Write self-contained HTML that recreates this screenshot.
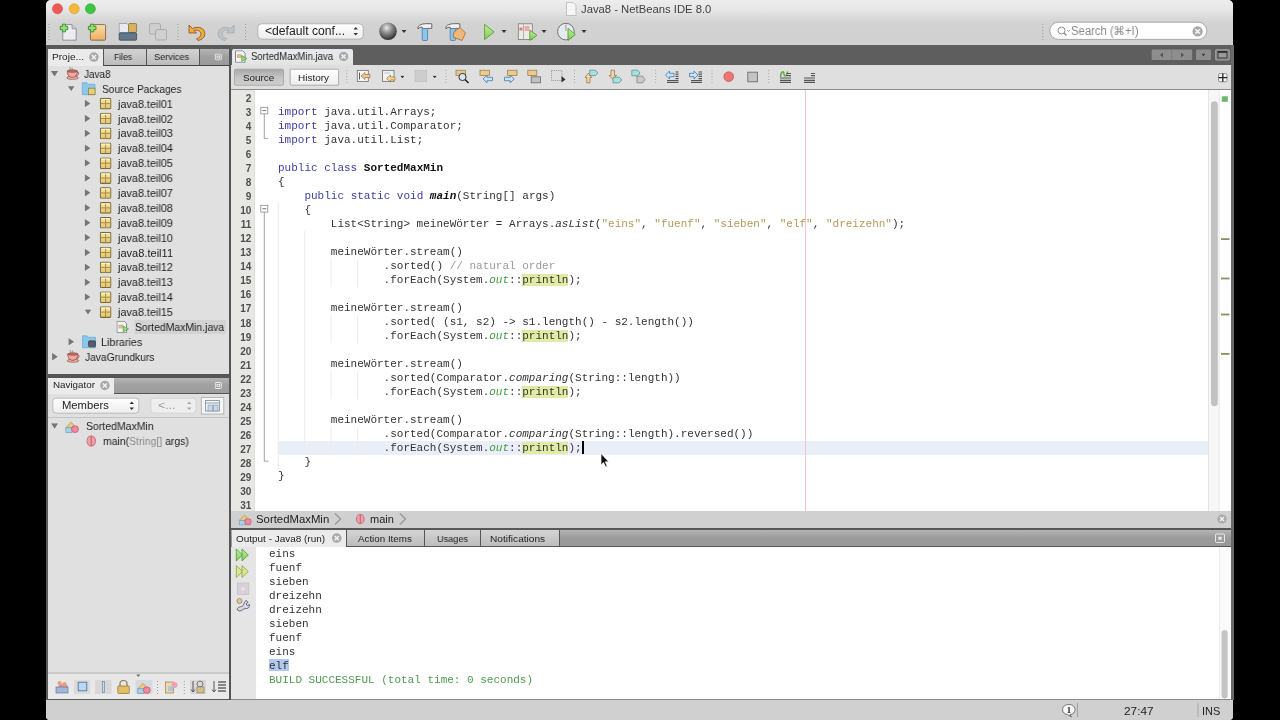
<!DOCTYPE html>
<html><head><meta charset="utf-8">
<style>
*{margin:0;padding:0;box-sizing:border-box}
html,body{width:1280px;height:720px;overflow:hidden;background:#000}
body{position:relative;font-family:"Liberation Sans",sans-serif;font-size:11px;color:#222}
.a{position:absolute}
.t{position:absolute;white-space:pre;line-height:14px;will-change:transform}
.mono{font-family:"Liberation Mono",monospace}
#code k{color:#3d3d9e}
#code s{color:#b39a5c;text-decoration:none}
#code c{color:#9a9a9a}
#code o{color:#3f9c3f;font-style:italic}
#code h{background:#e2eba5}
#code b{font-weight:bold;color:#111}
#code u{display:inline-block;width:2px;height:13px;background:#000;vertical-align:-3px;margin-left:0}
.lb{position:absolute;white-space:pre;line-height:1;transform-origin:0 0;will-change:transform}
</style></head><body>
<!-- window -->
<div class="a" id="win" style="left:46px;top:0;width:1187px;height:720px;background:#e6e6e6;border-radius:5px 5px 4px 4px;overflow:hidden">
</div>
<!-- title/toolbar -->
<div class="a" style="left:46px;top:0;width:1187px;height:45px;background:linear-gradient(#ededed,#e6e6e6 10px,#d3d3d3 22px,#d0d0d0);border-radius:5px 5px 0 0"></div>
<!-- dark band under toolbar -->
<div class="a" style="left:46px;top:45px;width:1187px;height:4px;background:#595959"></div>

<!-- left panel -->
<div class="a" style="left:46px;top:48px;width:2px;height:652px;background:#5c5c5c"></div>
<div class="a" style="left:47px;top:49px;width:182px;height:325px;background:#e0e0e0"></div>
<!-- project tabs row -->
<div class="a" style="left:47px;top:49px;width:182px;height:17px;background:linear-gradient(#b5b5b5,#a0a0a0 45%,#9a9a9a)"></div>
<div class="a" style="left:47px;top:49px;width:56px;height:17px;background:#ebebeb"></div>
<div class="a" style="left:103px;top:49px;width:43px;height:17px;background:linear-gradient(#d2d2d2,#bcbcbc);border-left:1px solid #555;border-bottom:1px solid #444"></div>
<div class="a" style="left:146px;top:49px;width:54px;height:17px;background:linear-gradient(#d2d2d2,#bcbcbc);border-left:1px solid #555;border-bottom:1px solid #444;border-right:1px solid #555"></div>
<div class="a" style="left:200px;top:65px;width:29px;height:1px;background:#444"></div>
<!-- divider between projects & navigator -->
<div class="a" style="left:47px;top:374px;width:182px;height:4px;background:#555"></div>
<!-- navigator -->
<div class="a" style="left:47px;top:378px;width:182px;height:322px;background:#e0e0e0"></div>
<div class="a" style="left:47px;top:378px;width:182px;height:16px;background:linear-gradient(#b5b5b5,#a0a0a0 45%,#9c9c9c)"></div>
<div class="a" style="left:47px;top:378px;width:67px;height:15.5px;background:#ebebeb"></div>
<div class="a" style="left:114px;top:393px;width:115px;height:1px;background:#555"></div>
<div class="a" style="left:47px;top:417px;width:182px;height:1px;background:#c4c4c4"></div>
<div class="a" style="left:47px;top:672px;width:182px;height:2px;background:#cacaca"></div>
<div class="a" style="left:47px;top:674px;width:182px;height:26px;background:linear-gradient(#e6e6e6,#ebebeb);border-bottom:1px solid #5c5c5c"></div>

<div class="a" style="left:46px;top:48px;width:2px;height:652px;background:#5c5c5c"></div>
<!-- vertical divider -->
<div class="a" style="left:229px;top:48px;width:2px;height:652px;background:#555"></div>

<!-- editor tab bar -->
<div class="a" style="left:231px;top:45px;width:1002px;height:20px;background:#5e5e5e"></div>
<div class="a" style="left:231px;top:64.5px;width:1002px;height:1px;background:#2e2e2e"></div>
<div class="a" style="left:232px;top:49px;width:121px;height:17px;background:linear-gradient(#e4e8ee,#e9e9e9 40%,#e2e2e2);border-radius:2px 2px 0 0"></div>
<!-- editor toolbar -->
<div class="a" style="left:231px;top:65px;width:1000px;height:24px;background:#dfdfdf"></div>
<div class="a" style="left:231px;top:89px;width:1000px;height:1px;background:#8c8c8c"></div>
<!-- editor content -->
<div class="a" style="left:231px;top:90px;width:1000px;height:421px;background:#fff"></div>
<div class="a" style="left:231px;top:90px;width:23.5px;height:421px;background:#e7e7e4;border-right:1px solid #dedede"></div>
<!-- breadcrumb -->
<div class="a" style="left:231px;top:511px;width:1000px;height:17.5px;background:#d0d0d0"></div>
<div class="a" style="left:231px;top:527.8px;width:1000px;height:2.8px;background:#575757"></div>
<!-- output tabs -->
<div class="a" style="left:231px;top:530px;width:1000px;height:17px;background:linear-gradient(#b5b5b5,#9c9c9c 45%,#989898)"></div>
<div class="a" style="left:232px;top:530px;width:114px;height:17px;background:#ebebeb"></div>
<div class="a" style="left:346px;top:530px;width:214px;height:17px;background:linear-gradient(#d4d4d4,#bdbdbd);border-left:1px solid #555;border-bottom:1px solid #555;border-right:1px solid #555"></div>
<div class="a" style="left:424px;top:530px;width:1px;height:17px;background:#555"></div>
<div class="a" style="left:480px;top:530px;width:1px;height:17px;background:#555"></div>
<div class="a" style="left:560px;top:546px;width:671px;height:1px;background:#555"></div>
<!-- output content -->
<div class="a" style="left:231px;top:547px;width:1000px;height:153px;background:#fff"></div>
<div class="a" style="left:231px;top:547px;width:25px;height:153px;background:#e5e5e5"></div>
<div class="a" style="left:231px;top:699px;width:1000px;height:1px;background:#8a8a8a"></div>
<!-- status bar -->
<div class="a" style="left:46px;top:700px;width:1187px;height:20px;background:#d0d0d0;border-radius:0 0 4px 4px"></div>
<div class="a" style="left:1231px;top:45px;width:2.5px;height:655px;background:#6a6a6a"></div>

<div class="a" style="left:277.5px;top:441px;width:930.5px;height:14px;background:#e9eef8"></div>
<!--ICONS-->
<svg class="a" style="left:0;top:0" width="1280" height="720" viewBox="0 0 1280 720"><defs>
<linearGradient id="gOr" x1="0" y1="0" x2="0" y2="1"><stop offset="0" stop-color="#fbdca8"/><stop offset="1" stop-color="#eeae62"/></linearGradient>
<linearGradient id="gGr" x1="0" y1="0" x2="0" y2="1"><stop offset="0" stop-color="#c4f0a0"/><stop offset="1" stop-color="#7ccc52"/></linearGradient>
<linearGradient id="gPk" x1="0" y1="0" x2="0" y2="1"><stop offset="0" stop-color="#f8e8a8"/><stop offset="1" stop-color="#e0c470"/></linearGradient>
<radialGradient id="gGlobe" cx="0.42" cy="0.3" r="0.7"><stop offset="0" stop-color="#e8e8e8"/><stop offset="0.45" stop-color="#8a8a8a"/><stop offset="1" stop-color="#2e2e2e"/></radialGradient>
<linearGradient id="gBtn" x1="0" y1="0" x2="0" y2="1"><stop offset="0" stop-color="#ffffff"/><stop offset="1" stop-color="#ededed"/></linearGradient>
<linearGradient id="gBtnDn" x1="0" y1="0" x2="0" y2="1"><stop offset="0" stop-color="#a8a8a8"/><stop offset="0.5" stop-color="#c4c4c4"/><stop offset="1" stop-color="#d0d0d0"/></linearGradient>
<symbol id="closeC" viewBox="0 0 12 12"><circle cx="6" cy="6" r="5.5" fill="#a9a9a9"/><path d="M3.6 3.6L8.4 8.4M8.4 3.6L3.6 8.4" stroke="#f4f4f4" stroke-width="1.6"/></symbol>
<symbol id="pkg" viewBox="0 0 12 12"><rect x="0.6" y="0.6" width="10.8" height="10.8" rx="1.2" fill="url(#gPk)" stroke="#7a6a38" stroke-width="1.1"/><path d="M6 1V11M1 6H11" stroke="#a88a40" stroke-width="1"/><path d="M1.5 1.8H10.5" stroke="#fff8d8" stroke-width="0.9"/></symbol>
<symbol id="triR" viewBox="0 0 6 8"><path d="M0 0L6 4L0 8Z" fill="#767676"/></symbol>
<symbol id="triD" viewBox="0 0 8 6"><path d="M0 0H8L4 6Z" fill="#767676"/></symbol>
<symbol id="ddArr" viewBox="0 0 5 3"><path d="M0 0H5L2.5 3Z" fill="#333"/></symbol>
<symbol id="cup" viewBox="0 0 13 13"><path d="M3.8 0.3C2.8 1.3 4.8 2 3.8 3.3M5.8 0.8C5.2 1.6 6.4 2.2 5.8 3.2" stroke="#6a8a7a" fill="none" stroke-width="0.9"/><ellipse cx="6.2" cy="11" rx="5.8" ry="1.7" fill="#e8aaa0" stroke="#8a5048" stroke-width="0.7"/><path d="M1 4.2H11C11 8.2 9 10.6 6 10.6C3 10.6 1 8.2 1 4.2Z" fill="#f2a8a0" stroke="#8a4a40" stroke-width="0.8"/><ellipse cx="6" cy="4.3" rx="5" ry="1.3" fill="#b86a60" stroke="#8a4a40" stroke-width="0.5"/><path d="M10.8 5.2C13 5.2 13 8.6 10 8.6" stroke="#8a4a40" fill="none" stroke-width="1"/></symbol>
<symbol id="jfile" viewBox="0 0 13 13"><path d="M0.5 0.5H8L10.5 3V12.5H0.5Z" fill="#f4f4f4" stroke="#6a7a8a" stroke-width="0.9"/><rect x="2" y="4" width="5" height="4" fill="#d8b890"/><path d="M7 5.5L12.5 8.5L7 11.5Z" fill="#9ad870" stroke="#4a9a3a" stroke-width="0.7"/></symbol>
<symbol id="restore" viewBox="0 0 10 10"><rect x="0.7" y="0.7" width="8.6" height="8.6" rx="1.2" fill="none" stroke="#f4f4f4" stroke-width="1.3"/><rect x="3.2" y="3.6" width="3.8" height="2.8" fill="none" stroke="#f4f4f4" stroke-width="1.1"/></symbol>
<symbol id="classI" viewBox="0 0 14 14"><path d="M1 8L6 3L9 6L4 11Z" fill="#f0c878" stroke="#a08040" stroke-width="0.6"/><path d="M0.5 8.5H7V13.5H0.5Z" fill="#a8d0f0" stroke="#5a8ab0" stroke-width="0.6"/><circle cx="10" cy="10" r="3.5" fill="#f08a9a" stroke="#b04a5a" stroke-width="0.6"/></symbol>
<symbol id="methI" viewBox="0 0 10 12"><ellipse cx="5" cy="6" rx="4.5" ry="5.5" fill="#eea0a8" stroke="#b85a68" stroke-width="0.8"/><path d="M5 0.8V11.2" stroke="#b85a68" stroke-width="1"/></symbol>
<symbol id="chev" viewBox="0 0 8 14"><path d="M1 1L7 7L1 13" fill="none" stroke="#9a9a9a" stroke-width="1.6"/></symbol>
</defs>
<circle cx="57.5" cy="8.8" r="5" fill="#ec5b56" stroke="#d0403a" stroke-width="0.6"/>
<circle cx="74.2" cy="8.8" r="5" fill="#f5b73a" stroke="#d89a28" stroke-width="0.6"/>
<circle cx="90.4" cy="8.8" r="5" fill="#3ec541" stroke="#2ea830" stroke-width="0.6"/>
<path d="M566.5 2.5H573L576 5.5V15.5H566.5Z" fill="#f6f6f6" stroke="#b8b8b8" stroke-width="0.8"/>
<line x1="49" y1="24" x2="49" y2="41" stroke="#9a9a9a" stroke-width="1" stroke-dasharray="1 2"/>
<line x1="178" y1="24" x2="178" y2="41" stroke="#9a9a9a" stroke-width="1" stroke-dasharray="1 2"/>
<line x1="245.5" y1="24" x2="245.5" y2="41" stroke="#9a9a9a" stroke-width="1" stroke-dasharray="1 2"/>
<line x1="1042.8" y1="24" x2="1042.8" y2="41" stroke="#9a9a9a" stroke-width="1" stroke-dasharray="1 2"/>
<path d="M62.8 24.6H72L76.2 28.8V40.2H62.8Z" fill="#ececf2" stroke="#8a8a8a" stroke-width="0.9"/><path d="M72 24.6V28.8H76.2" fill="#c8c8d0" stroke="#8a8a8a" stroke-width="0.7"/>
<path d="M62.4 24.2H65.6V26.4H67.8V29.6H65.6V31.8H62.4V29.6H60.2V26.4H62.4Z" fill="#92e07a" stroke="#3a8a2a" stroke-width="0.9"/>
<rect x="90.4" y="24.6" width="15.2" height="15.6" rx="1" fill="url(#gOr)" stroke="#7a6650" stroke-width="0.9"/>
<path d="M90.60000000000001 24.2H93.8V26.4H96.0V29.6H93.8V31.8H90.60000000000001V29.6H88.4V26.4H90.60000000000001Z" fill="#92e07a" stroke="#3a8a2a" stroke-width="0.9"/>
<path d="M119.2 23.5H127L128.5 25V33H119.2Z" fill="#e8eaf0" stroke="#9a9a9a" stroke-width="0.8"/>
<rect x="128.6" y="23.5" width="8" height="9" rx="1" fill="#d8b060" stroke="#8a7040" stroke-width="0.8"/>
<rect x="119.2" y="32.8" width="17.4" height="7.4" rx="1" fill="#60788a" stroke="#3a4a58" stroke-width="0.8"/>
<rect x="149.5" y="23.6" width="11" height="10.5" rx="1.5" fill="#cfcfcf" stroke="#a8a8a8" stroke-width="0.9"/><rect x="155.5" y="29.5" width="11" height="10.5" rx="1.5" fill="#cfcfcf" stroke="#a8a8a8" stroke-width="0.9"/>
<path d="M189 25V33H196.5L194 30.5C197 29.5 201 31 201 34C201 36.5 199 38 196.5 38.8L198 40.5C202.5 39.5 204.8 37 204.8 33.8C204.8 28.5 199 25.5 192.5 28.5Z" fill="#f2ac3c" stroke="#8a5a20" stroke-width="0.9" stroke-linejoin="round"/>
<path d="M234 25V33H226.5L229 30.5C226 29.5 222 31 222 34C222 36.5 224 38 226.5 38.8L225 40.5C220.5 39.5 218.2 37 218.2 33.8C218.2 28.5 224 25.5 230.5 28.5Z" fill="#bfc4c8" stroke="#a8adb2" stroke-width="0.9" stroke-linejoin="round"/>
<rect x="257.8" y="23.8" width="105.4" height="15.4" rx="4" fill="url(#gBtn)" stroke="#a8a8a8" stroke-width="0.8"/>
<path d="M353.5 29.5L355.7 27L358 29.5Z M353.5 33L355.7 35.5L358 33Z" fill="#333"/>
<circle cx="388" cy="31.3" r="8.8" fill="url(#gGlobe)"/>
<use href="#ddArr" x="401.5" y="30" width="5" height="3"/>
<path d="M418 27C419.5 24 424 23.3 431.8 23.8V28.4H427.6V28.6H422.2V27.2C420.6 27 419.2 27.6 418 29Z" fill="#f2f2f2" stroke="#5a5a5a" stroke-width="0.9" stroke-linejoin="round"/>
<rect x="422.2" y="28.5" width="5.4" height="12" rx="1" fill="#8cc4ec" stroke="#4a7aa8" stroke-width="0.8"/>
<path d="M446 27C447.5 24 452 23.3 459.8 23.8V28.4H455.6V28.6H450.2V27.2C448.6 27 447.2 27.6 446 29Z" fill="#f2f2f2" stroke="#5a5a5a" stroke-width="0.9" stroke-linejoin="round"/>
<rect x="450.2" y="28.5" width="5.4" height="12" rx="1" fill="#8cc4ec" stroke="#4a7aa8" stroke-width="0.8"/>
<path d="M454 32L460 27.5L465.5 33L462 40.5L453 37Z" fill="#f0b878" stroke="#9a6a3a" stroke-width="0.8"/>
<path d="M484.6 24.3L494 32L484.6 39.6Z" fill="url(#gGr)" stroke="#5a9a3a" stroke-width="0.9" stroke-linejoin="round"/>
<use href="#ddArr" x="501.5" y="30" width="5" height="3"/>
<rect x="518.3" y="23.8" width="14" height="15.6" fill="#ecece4" stroke="#7a7a7a" stroke-width="0.8"/><line x1="523.5" y1="24" x2="523.5" y2="39.4" stroke="#9a9a9a" stroke-width="0.7"/><rect x="519.5" y="27.5" width="3" height="3" fill="#e07a7a"/><rect x="524.5" y="26" width="5" height="5" fill="#f0a8a8"/>
<path d="M529.8 30.2L537 35.3L529.8 40.5Z" fill="url(#gGr)" stroke="#5a9a3a" stroke-width="0.9" stroke-linejoin="round"/>
<use href="#ddArr" x="541.5" y="30" width="5" height="3"/>
<circle cx="565.9" cy="31.6" r="8.3" fill="#e4ecf2" stroke="#707070" stroke-width="1"/><line x1="565.9" y1="24.5" x2="565.9" y2="31" stroke="#c08060" stroke-width="0.9"/>
<path d="M568 28.3L575.3 34.4L568 40.5Z" fill="url(#gGr)" stroke="#5a9a3a" stroke-width="0.9" stroke-linejoin="round"/>
<use href="#ddArr" x="581.5" y="30" width="5" height="3"/>
<rect x="1049.8" y="22.2" width="157" height="17.2" rx="8.6" fill="#fff" stroke="#a0a0a0" stroke-width="0.9"/>
<circle cx="1061.5" cy="30.5" r="3.5" fill="none" stroke="#8a8a8a" stroke-width="1"/><line x1="1064" y1="33" x2="1066.5" y2="35.5" stroke="#8a8a8a" stroke-width="1.2"/><path d="M1067 30L1068.5 31.5L1070 30" fill="none" stroke="#8a8a8a" stroke-width="0.8"/>
<use href="#closeC" x="1192" y="25.8" width="11.2" height="11.2"/>
<use href="#closeC" x="88.7" y="51.9" width="10.4" height="10.4"/>
<use href="#restore" x="214.5" y="53.5" width="7.5" height="7" />
<use href="#triD" x="50.9" y="71.0" width="7.2" height="5.5"/>
<use href="#cup" x="66.3" y="66.8" width="13" height="13"/>
<use href="#triD" x="67.9" y="85.89" width="6.6" height="5.5"/>
<path d="M82.3 82.69H87L88.5 84.19H95V94.69H82.3Z" fill="#88c8ee" stroke="#5aa0d0" stroke-width="0.6"/>
<rect x="88.5" y="88.19" width="6.5" height="6.5" fill="#e8d070" stroke="#8a7a38" stroke-width="0.7"/>
<use href="#triR" x="84.6" y="99.78" width="5.9" height="7.5"/>
<use href="#pkg" x="99.6" y="97.78" width="12" height="11.7"/>
<use href="#triR" x="84.6" y="114.67" width="5.9" height="7.5"/>
<use href="#pkg" x="99.6" y="112.67" width="12" height="11.7"/>
<use href="#triR" x="84.6" y="129.56" width="5.9" height="7.5"/>
<use href="#pkg" x="99.6" y="127.56000000000002" width="12" height="11.7"/>
<use href="#triR" x="84.6" y="144.45" width="5.9" height="7.5"/>
<use href="#pkg" x="99.6" y="142.45" width="12" height="11.7"/>
<use href="#triR" x="84.6" y="159.33999999999997" width="5.9" height="7.5"/>
<use href="#pkg" x="99.6" y="157.33999999999997" width="12" height="11.7"/>
<use href="#triR" x="84.6" y="174.23" width="5.9" height="7.5"/>
<use href="#pkg" x="99.6" y="172.23" width="12" height="11.7"/>
<use href="#triR" x="84.6" y="189.12" width="5.9" height="7.5"/>
<use href="#pkg" x="99.6" y="187.12" width="12" height="11.7"/>
<use href="#triR" x="84.6" y="204.01" width="5.9" height="7.5"/>
<use href="#pkg" x="99.6" y="202.01" width="12" height="11.7"/>
<use href="#triR" x="84.6" y="218.89999999999998" width="5.9" height="7.5"/>
<use href="#pkg" x="99.6" y="216.89999999999998" width="12" height="11.7"/>
<use href="#triR" x="84.6" y="233.79000000000002" width="5.9" height="7.5"/>
<use href="#pkg" x="99.6" y="231.79000000000002" width="12" height="11.7"/>
<use href="#triR" x="84.6" y="248.68" width="5.9" height="7.5"/>
<use href="#pkg" x="99.6" y="246.68" width="12" height="11.7"/>
<use href="#triR" x="84.6" y="263.57" width="5.9" height="7.5"/>
<use href="#pkg" x="99.6" y="261.57" width="12" height="11.7"/>
<use href="#triR" x="84.6" y="278.46" width="5.9" height="7.5"/>
<use href="#pkg" x="99.6" y="276.46" width="12" height="11.7"/>
<use href="#triR" x="84.6" y="293.35" width="5.9" height="7.5"/>
<use href="#pkg" x="99.6" y="291.35" width="12" height="11.7"/>
<use href="#triD" x="84.6" y="309.24" width="6.8" height="5.5"/>
<use href="#pkg" x="99.6" y="306.24" width="12" height="11.7"/>
<rect x="134.3" y="319.93" width="92" height="14" fill="#d3d3d3"/>
<use href="#jfile" x="116.5" y="320.73" width="12.5" height="12.5"/>
<use href="#triR" x="68.3" y="338.02" width="5.9" height="7.5"/>
<path d="M82.5 335.82H87L88.5 337.32H95.5V347.82H82.5Z" fill="#88c8ee" stroke="#5aa0d0" stroke-width="0.6"/>
<rect x="88.5" y="340.82" width="7" height="6" rx="1" fill="#5a5a6a" stroke="#333" stroke-width="0.6"/>
<use href="#triR" x="52" y="352.91" width="5.9" height="7.5"/>
<use href="#cup" x="66.8" y="349.71000000000004" width="13" height="13"/>
<use href="#closeC" x="99.7" y="380.3" width="10.4" height="10.4"/>
<use href="#restore" x="214.5" y="382" width="7.5" height="7" />
<rect x="52.8" y="398.2" width="86" height="15" rx="3.5" fill="url(#gBtn)" stroke="#b0b0b0" stroke-width="0.8"/>
<path d="M129.5 404L131.7 401.5L134 404Z M129.5 407.5L131.7 410L134 407.5Z" fill="#333"/>
<rect x="150.8" y="398.2" width="45.2" height="15" rx="3.5" fill="#eeeeee" stroke="#cfcfcf" stroke-width="0.8"/>
<path d="M187 404L189.2 401.5L191.5 404Z M187 407.5L189.2 410L191.5 407.5Z" fill="#a8a8a8"/>
<rect x="201.3" y="397.5" width="22.5" height="16.5" fill="#f6f6f6" stroke="#a8a8a8" stroke-width="0.8"/>
<rect x="205.5" y="400.5" width="14" height="10.5" fill="none" stroke="#7a8a9a" stroke-width="0.8"/><line x1="205.5" y1="403" x2="219.5" y2="403" stroke="#7a8a9a" stroke-width="0.8"/><rect x="208" y="405" width="4.5" height="6" fill="#c8d8e8" stroke="#7a8a9a" stroke-width="0.6"/><rect x="213.5" y="405" width="4.5" height="6" fill="#c8d8e8" stroke="#7a8a9a" stroke-width="0.6"/>
<use href="#triD" x="51" y="423.2" width="7.2" height="5.5"/>
<use href="#classI" x="65.2" y="419.3" width="13.8" height="13.8"/>
<use href="#methI" x="86.3" y="435.3" width="9.8" height="11.5"/>
<path d="M136.3 674.5H140.3L138.3 677Z" fill="#6a6a6a"/>
<rect x="74" y="680" width="16" height="14" fill="#dadada"/><rect x="78.2" y="682.2" width="8.6" height="8.6" fill="#b8d8f4" stroke="#4a6a9a" stroke-width="0.8"/>
<rect x="95" y="680" width="16.5" height="14" fill="#d8d8d8"/><rect x="102.4" y="681.5" width="2.2" height="11" fill="#c8dcef" stroke="#6a7a8a" stroke-width="0.6"/>
<path d="M58 687L60 683L63 684L66 683L68 687Z" fill="#e89090"/><rect x="56" y="687" width="12" height="6" fill="#a0b8d8" stroke="#5a6a8a" stroke-width="0.6"/><circle cx="59.5" cy="683" r="2" fill="#e8a080"/><circle cx="64.5" cy="684" r="2" fill="#e8a080"/>
<path d="M120 686V683.5C120 679.5 127 679.5 127 683.5V686" fill="none" stroke="#8a7a58" stroke-width="1.2"/><rect x="117.8" y="686" width="11.5" height="7.5" rx="0.8" fill="#e0c060" stroke="#8a7030" stroke-width="0.7"/>
<rect x="135.5" y="680" width="17" height="14" fill="#d6dae0"/><use href="#classI" x="137" y="680.5" width="14" height="13.5"/>
<line x1="157.5" y1="681" x2="157.5" y2="694" stroke="#9a9a9a" stroke-dasharray="1 2"/><line x1="184.3" y1="681" x2="184.3" y2="694" stroke="#9a9a9a" stroke-dasharray="1 2"/>
<rect x="165.5" y="682" width="8" height="11" fill="#f0d8a0" stroke="#8a7040" stroke-width="0.6"/><circle cx="174.5" cy="685" r="3" fill="#f0a0b0"/><rect x="168" y="686" width="5" height="5" fill="#a8c8e8"/>
<rect x="190" y="680" width="16" height="14" fill="#d8d8d8"/><path d="M193 681V692M191 689.5L193 692L195 689.5" fill="none" stroke="#555" stroke-width="1"/><circle cx="200" cy="684" r="3" fill="none" stroke="#777"/><rect x="197" y="687" width="7" height="6" fill="#d8c080" stroke="#777" stroke-width="0.6"/>
<path d="M214 681V692M212 689.5L214 692L216 689.5" fill="none" stroke="#555" stroke-width="1"/><path d="M218 682H226M218 685H226M218 688H226M218 691H226" stroke="#666" stroke-width="1.4"/>
<use href="#jfile" x="235" y="50.3" width="12.5" height="12.5"/>
<use href="#closeC" x="338.4" y="51.3" width="10.4" height="10.4"/>
<rect x="1151.7" y="49.6" width="40.5" height="10.5" rx="1" fill="#8e8e8e"/><line x1="1171.7" y1="49.6" x2="1171.7" y2="60.1" stroke="#7a7a7a"/><path d="M1163 52.5L1160 55L1163 57.5Z M1181 52.5L1184 55L1181 57.5Z" fill="#555"/>
<rect x="1196" y="49.6" width="15" height="10.5" rx="1" fill="#8e8e8e"/><path d="M1201.5 53.5H1505.5" /><path d="M1201.5 53.5H1505.5L1203.5 56.5Z" fill="none"/><path d="M1201.5 53.5H1505.5" stroke="none"/><path d="M1201.8 53.8H1205.2L1203.5 56.2Z" fill="#333"/>
<rect x="1215.5" y="49.6" width="14" height="10.5" rx="1" fill="#8a8a8a" stroke="#aaaaaa" stroke-width="0.7"/><rect x="1218" y="51.5" width="9" height="6.5" fill="#9a9a9a" stroke="#333" stroke-width="0.9"/><line x1="1218" y1="52.2" x2="1227" y2="52.2" stroke="#222" stroke-width="1.2"/>
<rect x="234.5" y="69.2" width="49" height="16" rx="1" fill="url(#gBtnDn)" stroke="#a0a0a0" stroke-width="0.8"/>
<rect x="290.2" y="69.2" width="48.4" height="16" rx="1" fill="url(#gBtn)" stroke="#9a9a9a" stroke-width="0.8"/>
<line x1="346.7" y1="70" x2="346.7" y2="83" stroke="#a8a8a8" stroke-width="1" stroke-dasharray="1 2"/>
<line x1="446" y1="70" x2="446" y2="83" stroke="#a8a8a8" stroke-width="1" stroke-dasharray="1 2"/>
<line x1="574.5" y1="70" x2="574.5" y2="83" stroke="#a8a8a8" stroke-width="1" stroke-dasharray="1 2"/>
<line x1="655.7" y1="70" x2="655.7" y2="83" stroke="#a8a8a8" stroke-width="1" stroke-dasharray="1 2"/>
<line x1="712" y1="70" x2="712" y2="83" stroke="#a8a8a8" stroke-width="1" stroke-dasharray="1 2"/>
<line x1="768.7" y1="70" x2="768.7" y2="83" stroke="#a8a8a8" stroke-width="1" stroke-dasharray="1 2"/>
<rect x="357.3" y="70.4" width="11" height="11" fill="#f8f8f8" stroke="#7a7a7a" stroke-width="0.9"/><line x1="359.5" y1="72.5" x2="359.5" y2="79.5" stroke="#444" stroke-width="0.9"/><path d="M361 76L365 72.5V74.5H370V77.5H365V79.5Z" fill="#f0c890" stroke="#9a7040" stroke-width="0.7"/>
<rect x="382.5" y="70.4" width="11.5" height="11" fill="#f0f0f6" stroke="#7a7a7a" stroke-width="0.9"/><line x1="384.5" y1="73" x2="390" y2="73" stroke="#b8c0c8"/><path d="M386.5 78.5L390.5 75V77H395V80H390.5V82Z" fill="#f8d890" stroke="#9a7a30" stroke-width="0.7"/>
<use href="#ddArr" x="400.3" y="75.5" width="4.2" height="2.8"/>
<rect x="415" y="70.4" width="11.7" height="11" fill="#cdcdcd" stroke="#c0c0c0" stroke-width="0.8"/>
<use href="#ddArr" x="432.6" y="75.5" width="4.2" height="2.8"/>
<rect x="456" y="70.2" width="9.5" height="5.2" fill="#e8c88a" stroke="#8a7a50" stroke-width="0.7"/><circle cx="462.5" cy="77" r="3.6" fill="#d8e4f0" stroke="#333" stroke-width="1"/><line x1="465" y1="79.5" x2="468.5" y2="83" stroke="#222" stroke-width="1.6"/>
<rect x="480" y="70.2" width="9.4" height="5.2" fill="#f0c88a" stroke="#8a7a50" stroke-width="0.7"/><path d="M483 79L487 75.2V77.3H492.5V80.7H487V82.8Z" fill="#c8e4f8" stroke="#4a7aa8" stroke-width="0.8"/>
<rect x="507.6" y="70.2" width="9.4" height="5.2" fill="#f0c88a" stroke="#8a7a50" stroke-width="0.7"/><path d="M514.2 79L510.2 75.2V77.3H504.5V80.7H510.2V82.8Z" fill="#c8e4f8" stroke="#4a7aa8" stroke-width="0.8"/>
<rect x="527.8" y="70.2" width="9" height="5.4" fill="#f0c88a" stroke="#8a7a50" stroke-width="0.7"/><rect x="531.2" y="76.8" width="9.2" height="6" fill="#c0c0c0" stroke="#6a6a6a" stroke-width="0.8"/>
<rect x="551.5" y="70.5" width="10.5" height="10" fill="none" stroke="#8a8a8a" stroke-width="0.8" stroke-dasharray="1.2 1"/><path d="M561.5 76V82.5L565.5 79.5Z" fill="#333"/>
<path d="M585 77.5L588.4 73.2L591.8 77.5H590V82.8H586.8V77.5Z" fill="#f8d8a0" stroke="#8a6a40" stroke-width="0.7"/><path d="M589.7 70.2H595.5L597.8 72.9L595.5 75.6H589.7Z" fill="#a8e0e0" stroke="#4a8a8a" stroke-width="0.7"/>
<path d="M609 75.5L612.8 79.2L616.6 75.5H614.5V70.2H611V75.5Z" fill="#f8d8a0" stroke="#8a6a40" stroke-width="0.7"/><path d="M613 77.2H619.4L621.7 80L619.4 82.8H613Z" fill="#a8e0e0" stroke="#4a8a8a" stroke-width="0.7"/>
<path d="M631.8 70.2H637.8L640 73L637.8 75.8H631.8Z" fill="#a8e0e0" stroke="#4a8a8a" stroke-width="0.7"/><path d="M636.9 76.2H642.8L645 79.5L642.8 82.8H636.9Z" fill="#cacaca" stroke="#7a7a7a" stroke-width="0.7"/>
<path d="M665.5 75L669.5 71V73.3H674V76.7H669.5V79Z" fill="#c8e4f8" stroke="#4a7aa8" stroke-width="0.8"/><path d="M675.5 72H678.5M675.5 74.2H678.5M675.5 76.4H678.5M675.5 78.6H678.5M667 80.6H678.5M667 82.5H678.5" stroke="#555" stroke-width="1.2"/>
<path d="M698 75L694 71V73.3H689.5V76.7H694V79Z" fill="#c8e4f8" stroke="#4a7aa8" stroke-width="0.8"/><path d="M698.5 72H702M698.5 74.2H702M698.5 76.4H702M698.5 78.6H702M691 80.6H702M691 82.5H702" stroke="#555" stroke-width="1.2"/>
<circle cx="728.7" cy="76.7" r="4.8" fill="#f07474" stroke="#c05050" stroke-width="0.8"/>
<rect x="747.8" y="72.2" width="9.6" height="9.6" fill="#c4c4c4" stroke="#6e6e6e" stroke-width="0.9"/>
<path d="M780.5 77C781 71 784 70.5 784 74C784 77 787 77 787.5 71.5" fill="none" stroke="#5aa83a" stroke-width="1.4"/><path d="M786.5 73.5H791M786.5 75.7H791M780 78H791M780 80.3H791M780 82.4H791" stroke="#555" stroke-width="1.2"/>
<path d="M811 73.5H815M811 75.7H815M804 78H815M804 80.3H815M804 82.4H815" stroke="#555" stroke-width="1.2"/>
<rect x="1218.5" y="73.6" width="8.6" height="8.2" rx="1.5" fill="#f4f4f4" stroke="#8a8a8a" stroke-width="0.9"/><path d="M1222.8 73.6V81.8M1218.5 77.7H1227.1" stroke="#222" stroke-width="1.3"/>
<rect x="260.8" y="107.3" width="7" height="6.6" fill="#fff" stroke="#8a8a8a" stroke-width="0.8"/><line x1="262.3" y1="110.6" x2="266.3" y2="110.6" stroke="#555" stroke-width="0.8"/><path d="M264.3 113.9V138.6H268" fill="none" stroke="#8a8a8a" stroke-width="0.8"/>
<rect x="260.8" y="205.3" width="7" height="6.8" fill="#fff" stroke="#8a8a8a" stroke-width="0.8"/><line x1="262.3" y1="208.7" x2="266.3" y2="208.7" stroke="#555" stroke-width="0.8"/><path d="M264.3 212.1V461.2H268.5" fill="none" stroke="#8a8a8a" stroke-width="0.8"/>
<line x1="278.3" y1="203" x2="278.3" y2="469" stroke="#ececec" stroke-width="1"/>
<line x1="304.7" y1="231" x2="304.7" y2="455" stroke="#ececec" stroke-width="1"/>
<line x1="331.1" y1="259" x2="331.1" y2="287" stroke="#ececec" stroke-width="1"/>
<line x1="357.5" y1="259" x2="357.5" y2="287" stroke="#ececec" stroke-width="1"/>
<line x1="331.1" y1="315" x2="331.1" y2="343" stroke="#ececec" stroke-width="1"/>
<line x1="357.5" y1="315" x2="357.5" y2="343" stroke="#ececec" stroke-width="1"/>
<line x1="331.1" y1="371" x2="331.1" y2="399" stroke="#ececec" stroke-width="1"/>
<line x1="357.5" y1="371" x2="357.5" y2="399" stroke="#ececec" stroke-width="1"/>
<line x1="331.1" y1="427" x2="331.1" y2="455" stroke="#ececec" stroke-width="1"/>
<line x1="357.5" y1="427" x2="357.5" y2="455" stroke="#ececec" stroke-width="1"/>
<rect x="1208.3" y="90" width="11" height="421" fill="#f7f7f7"/><line x1="1208.5" y1="90" x2="1208.5" y2="511" stroke="#e4e4e4"/><line x1="1219.2" y1="90" x2="1219.2" y2="511" stroke="#e8e8e8"/>
<rect x="1211" y="101.2" width="6.8" height="305" rx="3.4" fill="#c2c2c2"/>
<rect x="1221.8" y="96.3" width="6" height="5.5" fill="#6ab86a"/>
<rect x="1221" y="238.2" width="8.5" height="1.8" fill="#8e8c60"/>
<rect x="1221" y="277.59999999999997" width="8.5" height="1.8" fill="#8e8c60"/>
<rect x="1221" y="313.59999999999997" width="8.5" height="1.8" fill="#8e8c60"/>
<rect x="1221" y="353.0" width="8.5" height="1.8" fill="#8e8c60"/>
<use href="#classI" x="238.8" y="512.5" width="13" height="13"/>
<use href="#chev" x="334" y="512.5" width="7.5" height="13"/>
<use href="#methI" x="355.6" y="513.8" width="9.4" height="10.5"/>
<use href="#chev" x="399" y="512.5" width="7.5" height="13"/>
<use href="#closeC" x="1217" y="514" width="10" height="10"/>
<use href="#closeC" x="331.5" y="532.8" width="10.5" height="10.5"/>
<rect x="1215.5" y="534" width="9" height="8.5" rx="1" fill="none" stroke="#e8e8e8" stroke-width="1"/><rect x="1218.3" y="536.8" width="3.4" height="3" fill="#e8e8e8"/>
<path d="M236.3 549L242.5 555L236.3 561Z" fill="url(#gGr)" stroke="#4a9a3a" stroke-width="0.8"/><path d="M242 549L248.3 555L242 561Z" fill="url(#gGr)" stroke="#4a9a3a" stroke-width="0.8"/>
<path d="M236.3 565.5L242.5 571.5L236.3 577.5Z" fill="#d8e890" stroke="#8aa040" stroke-width="0.8"/><path d="M242 565.5L248.3 571.5L242 577.5Z" fill="#d8e890" stroke="#8aa040" stroke-width="0.8"/>
<rect x="237.3" y="583" width="11.5" height="11.5" fill="#d8d0d8" stroke="#c8c0c8" stroke-width="0.8"/><circle cx="243" cy="588.7" r="2" fill="#e8e0e8"/>
<circle cx="239.5" cy="601" r="2.6" fill="#e0c890" stroke="#8a7a5a" stroke-width="0.7"/><path d="M237 609.5C238.5 606 241 607.5 243 605.5C244.5 604 244 601 246.5 600.5L248 602.5L246 604L247.5 605.5L249.5 604.5C250 607 248 609 245.5 608.5C243.5 608.5 242 611 239.5 611Z" fill="#d8d8e0" stroke="#555a70" stroke-width="0.9"/>
<rect x="1219" y="547" width="12" height="152" fill="#fbfbfb"/><line x1="1219.5" y1="547" x2="1219.5" y2="699" stroke="#ececec"/>
<rect x="1221.5" y="630" width="6.2" height="68.5" rx="3" fill="#c4c4c4"/>
<path d="M1068.8 704.5C1072.5 704.5 1075 706.6 1075 709.6C1075 712.2 1073 714.3 1070 714.6L1071.5 717L1067.5 714.6C1064.5 714.2 1062.6 712.2 1062.6 709.6C1062.6 706.6 1065.2 704.5 1068.8 704.5Z" fill="#fafafa" stroke="#555" stroke-width="0.8"/>
<text x="1068.8" y="712.6" font-family="Liberation Serif" font-size="8.5" font-weight="bold" text-anchor="middle" fill="#222">1</text>
<line x1="1077.5" y1="703" x2="1077.5" y2="717" stroke="#a0a0a0"/><line x1="1198" y1="703" x2="1198" y2="717" stroke="#a8a8a8"/></svg>
<!--/ICONS-->
<!-- editor code -->
<div class="a" style="left:805px;top:90px;width:1px;height:421px;background:#edc8c8"></div>
<div class="t" id="lnums" style="left:231px;top:91.5px;line-height:14.035px;width:20.3px;text-align:right;font-size:10px;font-weight:bold;color:#4e4e4e">2
3
4
5
6
7
8
9
10
11
12
13
14
15
16
17
18
19
20
21
22
23
24
25
26
27
28
29
30
31</div>
<div class="t mono" id="code" style="left:277.5px;top:90.6px;font-size:11px;color:#333">
<k>import</k> java.util.Arrays;
<k>import</k> java.util.Comparator;
<k>import</k> java.util.List;

<k>public</k> <k>class</k> <b>SortedMaxMin</b>
{
    <k>public</k> <k>static</k> <k>void</k> <b><i>main</i></b>(String[] args)
    {
        List&lt;String&gt; meineWörter = Arrays.<i>asList</i>(<s>"eins"</s>, <s>"fuenf"</s>, <s>"sieben"</s>, <s>"elf"</s>, <s>"dreizehn"</s>);

        meineWörter.stream()
                .sorted() <c>// natural order</c>
                .forEach(System.<o>out</o>::<h>println</h>);

        meineWörter.stream()
                .sorted( (s1, s2) -&gt; s1.length() - s2.length())
                .forEach(System.<o>out</o>::<h>println</h>);

        meineWörter.stream()
                .sorted(Comparator.<i>comparing</i>(String::length))
                .forEach(System.<o>out</o>::<h>println</h>);

        meineWörter.stream()
                .sorted(Comparator.<i>comparing</i>(String::length).reversed())
                .forEach(System.<o>out</o>::<h>println</h>);<u></u>
    }
}

</div>
<!--OUTPUT-->
<div class="a" style="left:268.6px;top:658.8px;width:20.4px;height:12.6px;background:#b0c9ee"></div>
<div class="t mono" id="outtxt" style="left:268.5px;top:546.7px;font-size:11px;color:#333;line-height:14.03px">eins
fuenf
sieben
dreizehn
dreizehn
sieben
fuenf
eins
elf
<span style="color:#4f9a4f">BUILD SUCCESSFUL (total time: 0 seconds)</span></div>
<!--/OUTPUT-->
<!--LABELS-->
<div class="lb" id="title" style="left:581.00px;top:4.12px;font-size:11.2px;color:#404040;transform:scaleX(1.0078);">Java8 - NetBeans IDE 8.0</div>
<div class="lb" id="conf" style="left:265.00px;top:25.14px;font-size:12px;color:#222;transform:scaleX(1.0128);">&lt;default conf...</div>
<div class="lb" id="search" style="left:1071.00px;top:25.14px;font-size:12px;color:#8a8a8a;transform:scaleX(0.9429);">Search (⌘+I)</div>
<div class="lb" id="tproj" style="left:51.50px;top:52.34px;font-size:9.4px;color:#222;transform:scaleX(1.0776);">Proje...</div>
<div class="lb" id="tfiles" style="left:114.40px;top:52.34px;font-size:9.4px;color:#222;transform:scaleX(0.9150);">Files</div>
<div class="lb" id="tserv" style="left:154.40px;top:52.34px;font-size:9.4px;color:#222;transform:scaleX(0.9778);">Services</div>
<div class="lb" id="tedit" style="left:250.50px;top:51.88px;font-size:10.3px;color:#222;transform:scaleX(0.9307);">SortedMaxMin.java</div>
<div class="lb" id="bsrc" style="left:242.75px;top:72.82px;font-size:9.9px;color:#222;transform:scaleX(0.9917);">Source</div>
<div class="lb" id="bhist" style="left:297.80px;top:72.82px;font-size:9.9px;color:#222;transform:scaleX(1.0097);">History</div>
<div class="lb" id="java8" style="left:84.40px;top:68.89px;font-size:11px;color:#222;transform:scaleX(0.9069);">Java8</div>
<div class="lb" id="srcpk" style="left:101.90px;top:83.79px;font-size:11px;color:#222;transform:scaleX(0.9212);">Source Packages</div>
<div class="lb" id="teil01" style="left:118.40px;top:98.67px;font-size:11px;color:#222;transform:scaleX(0.9857);">java8.teil01</div>
<div class="lb" id="teil02" style="left:118.40px;top:113.56px;font-size:11px;color:#222;transform:scaleX(0.9857);">java8.teil02</div>
<div class="lb" id="teil03" style="left:118.40px;top:128.45px;font-size:11px;color:#222;transform:scaleX(0.9857);">java8.teil03</div>
<div class="lb" id="teil04" style="left:118.40px;top:143.34px;font-size:11px;color:#222;transform:scaleX(0.9857);">java8.teil04</div>
<div class="lb" id="teil05" style="left:118.40px;top:158.23px;font-size:11px;color:#222;transform:scaleX(0.9857);">java8.teil05</div>
<div class="lb" id="teil06" style="left:118.40px;top:173.12px;font-size:11px;color:#222;transform:scaleX(0.9857);">java8.teil06</div>
<div class="lb" id="teil07" style="left:118.40px;top:188.01px;font-size:11px;color:#222;transform:scaleX(0.9857);">java8.teil07</div>
<div class="lb" id="teil08" style="left:118.40px;top:202.90px;font-size:11px;color:#222;transform:scaleX(0.9857);">java8.teil08</div>
<div class="lb" id="teil09" style="left:118.40px;top:217.79px;font-size:11px;color:#222;transform:scaleX(0.9857);">java8.teil09</div>
<div class="lb" id="teil10" style="left:118.40px;top:232.68px;font-size:11px;color:#222;transform:scaleX(0.9857);">java8.teil10</div>
<div class="lb" id="teil11" style="left:118.40px;top:247.57px;font-size:11px;color:#222;transform:scaleX(1.0036);">java8.teil11</div>
<div class="lb" id="teil12" style="left:118.40px;top:262.46px;font-size:11px;color:#222;transform:scaleX(0.9857);">java8.teil12</div>
<div class="lb" id="teil13" style="left:118.40px;top:277.35px;font-size:11px;color:#222;transform:scaleX(0.9857);">java8.teil13</div>
<div class="lb" id="teil14" style="left:118.40px;top:292.24px;font-size:11px;color:#222;transform:scaleX(0.9857);">java8.teil14</div>
<div class="lb" id="teil15" style="left:118.40px;top:307.13px;font-size:11px;color:#222;transform:scaleX(0.9857);">java8.teil15</div>
<div class="lb" id="smmj" style="left:135.00px;top:322.02px;font-size:11px;color:#222;transform:scaleX(0.9468);">SortedMaxMin.java</div>
<div class="lb" id="libs" style="left:101.20px;top:336.91px;font-size:11px;color:#222;transform:scaleX(0.9780);">Libraries</div>
<div class="lb" id="jgk" style="left:84.90px;top:351.80px;font-size:11px;color:#222;transform:scaleX(0.9307);">JavaGrundkurs</div>
<div class="lb" id="nav" style="left:52.80px;top:381.21px;font-size:9.2px;color:#222;transform:scaleX(1.0667);">Navigator</div>
<div class="lb" id="members" style="left:61.80px;top:399.69px;font-size:11px;color:#222;transform:scaleX(1.0222);">Members</div>
<div class="lb" id="lt" style="left:158.00px;top:399.69px;font-size:11px;color:#9a9a9a;transform:scaleX(1.1143);">&lt;...</div>
<div class="lb" id="nsmm" style="left:85.80px;top:420.69px;font-size:11px;color:#222;transform:scaleX(0.9543);">SortedMaxMin</div>
<div class="lb" id="nmain" style="left:102.80px;top:435.69px;font-size:11px;color:#222;transform:scaleX(0.9489);">main(<span style='color:#8a8a8a'>String[]</span> args)</div>
<div class="lb" id="bcsmm" style="left:256.25px;top:513.69px;font-size:11px;color:#222;transform:scaleX(1.0321);">SortedMaxMin</div>
<div class="lb" id="bcmain" style="left:370.00px;top:513.69px;font-size:11px;color:#222;transform:scaleX(0.9896);">main</div>
<div class="lb" id="otab" style="left:236.25px;top:533.67px;font-size:9.6px;color:#222;transform:scaleX(1.0371);">Output - Java8 (run)</div>
<div class="lb" id="oai" style="left:358.00px;top:533.67px;font-size:9.6px;color:#222;transform:scaleX(1.0189);">Action Items</div>
<div class="lb" id="ous" style="left:436.50px;top:533.67px;font-size:9.6px;color:#222;transform:scaleX(0.9531);">Usages</div>
<div class="lb" id="onot" style="left:490.20px;top:533.67px;font-size:9.6px;color:#222;transform:scaleX(1.0558);">Notifications</div>
<div class="lb" id="clock" style="left:1124.20px;top:705.71px;font-size:10.5px;color:#222;transform:scaleX(1.1240);">27:47</div>
<div class="lb" id="ins" style="left:1202.00px;top:705.71px;font-size:10.5px;color:#222;transform:scaleX(1.0438);">INS</div>
<!--/LABELS-->

<!--CURSOR-->
<svg class="a" style="left:0;top:0" width="1280" height="720"><path d="M601 453.5V465L603.6 462.5L605.6 467L607.2 466.3L605.3 461.8H608.8Z" fill="#111" stroke="#fff" stroke-width="0.7"/></svg>
</body></html>
